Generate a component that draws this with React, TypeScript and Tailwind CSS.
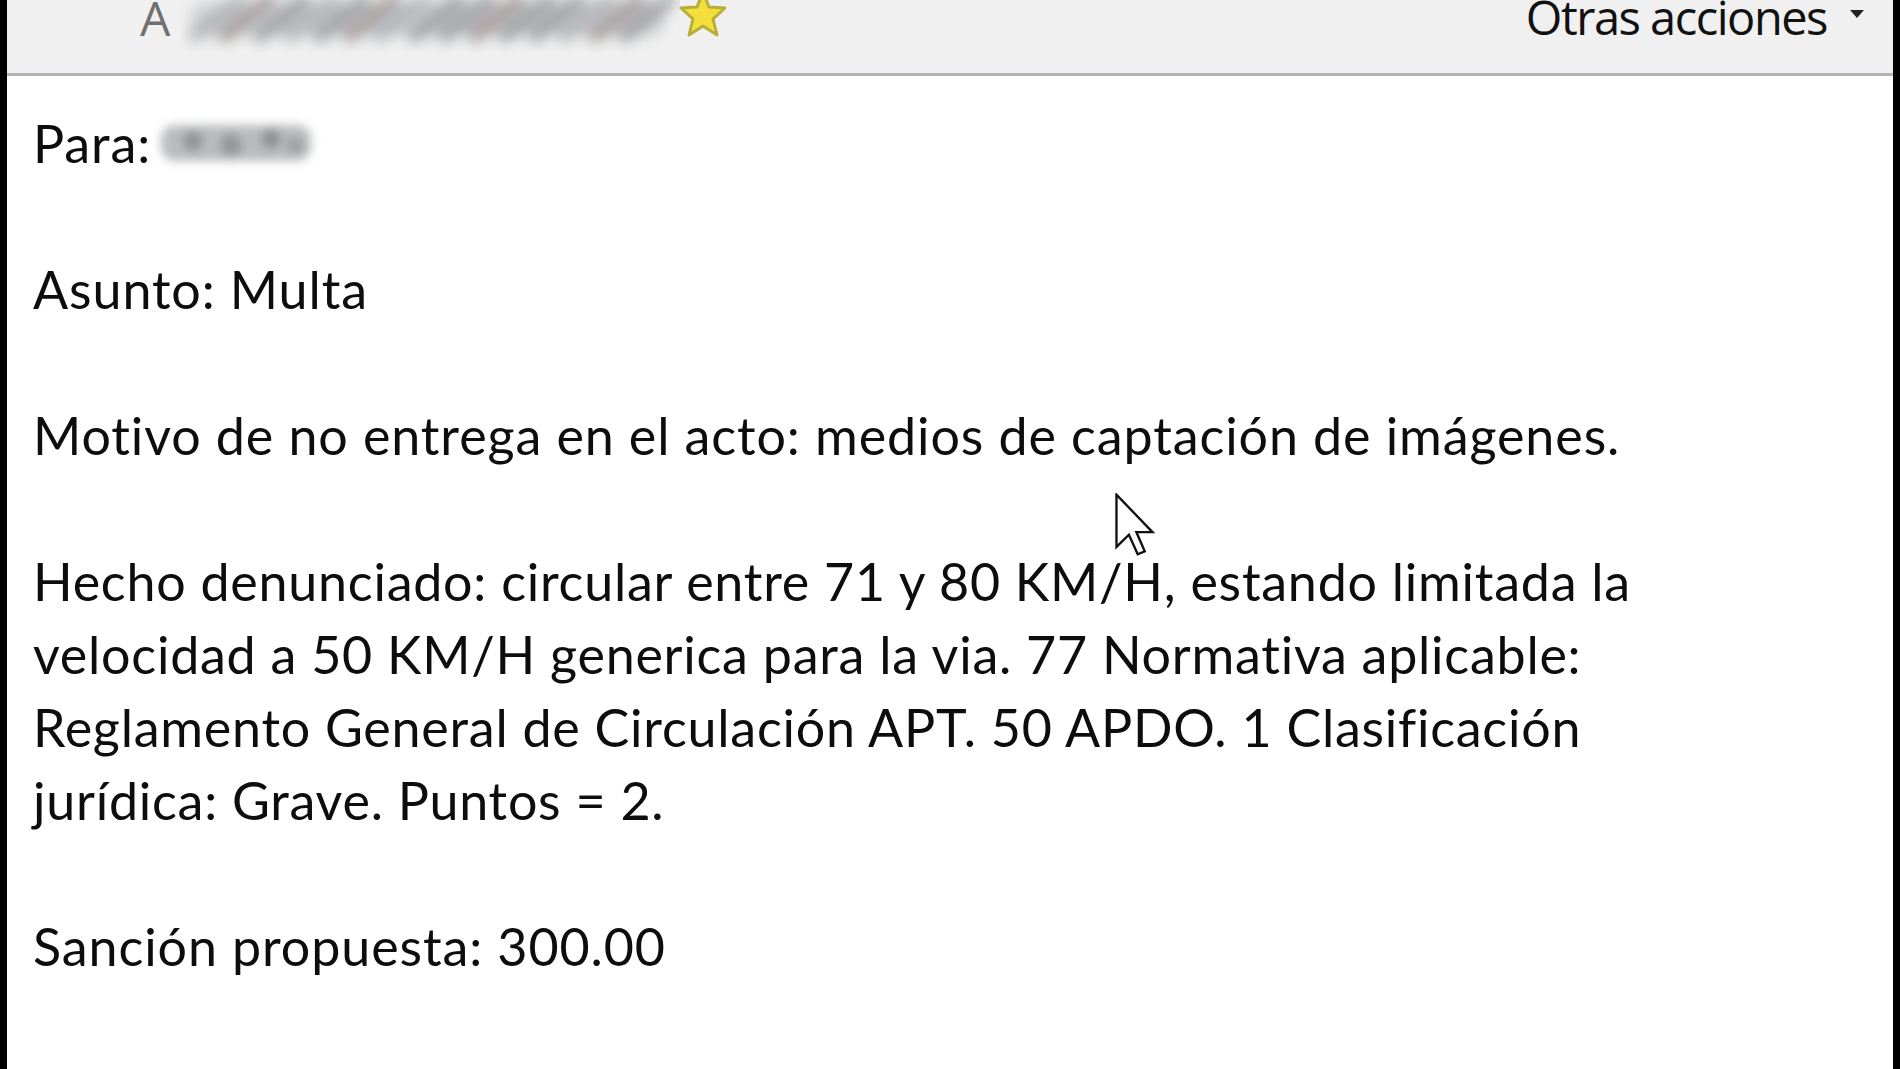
import React from "react";

function BlurName() {
  const strokes = [] as React.ReactElement[];
  const xs = [15, 45, 80, 110, 140, 170, 200, 235, 265, 295, 325, 355, 385, 415, 445];
  xs.forEach((x, i) => {
    const c = i % 4 === 1 ? "#8a7a7a" : i % 3 === 0 ? "#9ea3a8" : "#7f8286";
    strokes.push(
      <line key={i} x1={x} y1={44} x2={x + 44} y2={8} stroke={c} strokeWidth={15} strokeLinecap="round" opacity={0.6} />
    );
  });
  return (
    <svg width="500" height="60" viewBox="0 0 500 60" className="shrink-0">
      <defs>
        <filter id="bl" x="-10%" y="-50%" width="120%" height="200%">
          <feGaussianBlur stdDeviation="7" />
        </filter>
      </defs>
      <g filter="url(#bl)">
        <rect x="10" y="10" width="475" height="34" rx="14" fill="#bcbfc2" opacity="0.6" />
        {strokes}
      </g>
    </svg>
  );
}

function BlurSmall() {
  return (
    <svg width="170" height="64" viewBox="0 0 170 64" className="shrink-0">
      <defs>
        <filter id="bs" x="-20%" y="-40%" width="140%" height="180%">
          <feGaussianBlur stdDeviation="5" />
        </filter>
      </defs>
      <g filter="url(#bs)">
        <rect x="8" y="14" width="150" height="36" rx="14" fill="#a9abad" opacity="0.8" />
        <circle cx="40" cy="30" r="10" fill="#909294" />
        <circle cx="78" cy="34" r="11" fill="#949698" />
        <circle cx="118" cy="28" r="10" fill="#8f9193" />
        <circle cx="142" cy="34" r="8" fill="#9a9c9e" />
      </g>
    </svg>
  );
}

function Star() {
  return (
    <svg width="50" height="48" viewBox="0 0 50 48" className="shrink-0 -mt-[10px]">
      <polygon
        points="25,2 31,17 47,18 35,29 39,45 25,36 11,45 15,29 3,18 19,17"
        fill="#f3df3c"
        stroke="#b7ae3a"
        strokeWidth="3"
        strokeLinejoin="round"
      />
    </svg>
  );
}

function Cursor() {
  return (
    <svg width="42" height="64" viewBox="0 0 12 19" className="absolute left-[1114px] top-[493px]">
      <path
        d="M0.5 0.5 L0.5 16 L4.2 12.4 L6.8 18.2 L8.9 17.3 L6.4 11.6 L11.2 11.6 Z"
        fill="#ffffff"
        stroke="#111111"
        strokeWidth="0.7"
        strokeLinejoin="miter"
      />
    </svg>
  );
}

export default function App() {
  return (
    <div className="w-[1900px] h-[1069px] overflow-hidden bg-black flex relative">
      <div className="flex-1 mx-[7px] bg-white flex flex-col">
        <div className="h-[76px] shrink-0 bg-[#f0f0f0] border-b-[3px] border-[#b3b3bb] flex items-start pl-[133px] pr-[28px] overflow-hidden">
          <span className="text-[48px] leading-[48px] -mt-[6px] text-[#707070] font-['Open_Sans',sans-serif]">A</span>
          <div className="ml-[10px] -mt-[8px]">
            <BlurName />
          </div>
          <div className="-ml-[2px]">
            <Star />
          </div>
          <span className="ml-auto text-[47px] leading-[48px] -mt-[7px] text-[#111] font-['Open_Sans',sans-serif] tracking-[-1.5px]">
            Otras acciones
          </span>
          <svg width="16" height="9" viewBox="0 0 16 9" className="ml-[22px] mt-[10px]">
            <polygon points="1,0 15,0 8,8" fill="#222" />
          </svg>
        </div>
        <div className="pl-[26px] pt-[31px] text-[52px] leading-[73px] tracking-[0.9px] text-[#0d0d0d] font-['Lato',sans-serif] flex flex-col gap-[73px]">
          <div className="flex items-center">
            <span>Para:</span>
            <span className="ml-[2px] -mt-[2px]">
              <BlurSmall />
            </span>
          </div>
          <p>Asunto: Multa</p>
          <p>Motivo de no entrega en el acto: medios de captación de imágenes.</p>
          <p className="tracking-[0.75px]">
            Hecho denunciado: circular entre 71 y 80 KM/H, estando limitada la
            <br />
            velocidad a 50 KM/H generica para la via. 77 Normativa aplicable:
            <br />
            Reglamento General de Circulación APT. 50 APDO. 1 Clasificación
            <br />
            jurídica: Grave. Puntos = 2.
          </p>
          <p>Sanción propuesta: 300.00</p>
        </div>
      </div>
      <Cursor />
    </div>
  );
}
